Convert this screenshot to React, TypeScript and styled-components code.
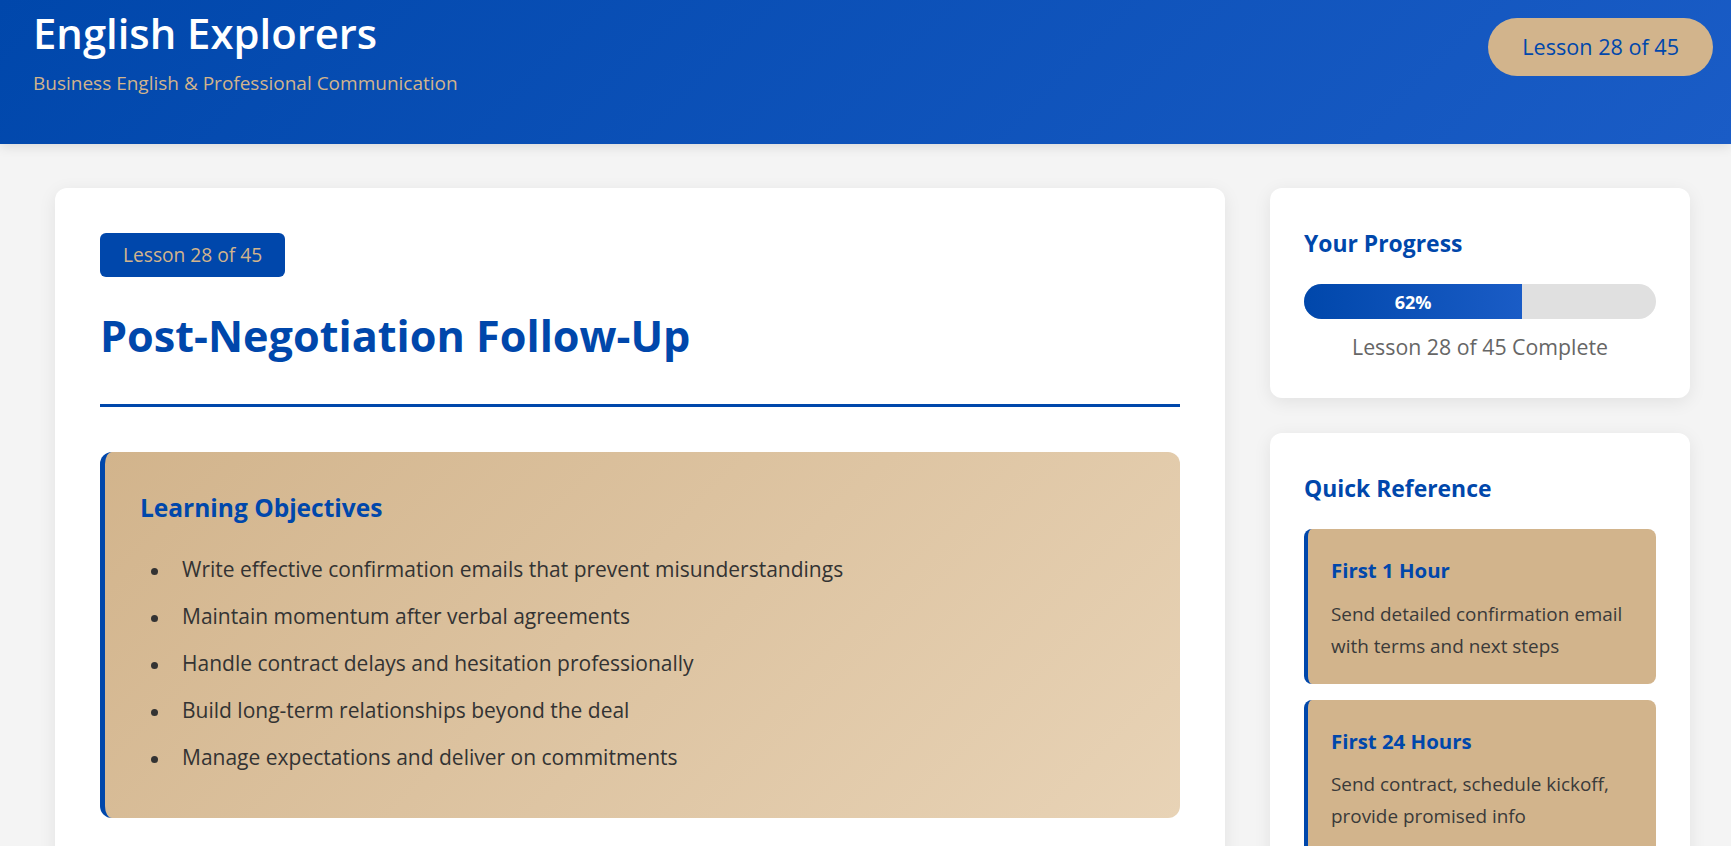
import styled, { createGlobalStyle } from 'styled-components'

const GlobalStyle = createGlobalStyle`
  body {
    margin: 0;
    background: #f4f4f4;
    font-family: 'Open Sans', 'Noto Sans', sans-serif;
    color: #333;
  }
`

const Header = styled.header`
  display: flex;
  justify-content: space-between;
  align-items: flex-start;
  height: 144px;
  box-sizing: border-box;
  padding: 7px 18px 0 33px;
  background: linear-gradient(135deg, #0047ab 0%, #1a5cc6 100%);
  box-shadow: 0 2px 12px rgba(0, 0, 0, 0.12);
`

const Brand = styled.div`
  display: flex;
  flex-direction: column;
`

const SiteTitle = styled.h1`
  margin: 0;
  font-size: 41.8px;
  line-height: 52px;
  font-weight: 600;
  color: #fff;
`

const Tagline = styled.p`
  margin: 10.5px 0 0;
  font-size: 19px;
  line-height: 26px;
  color: #d2b48c;
`

const LessonPill = styled.div`
  margin-top: 11px;
  padding: 15px 34px;
  border-radius: 40px;
  background: #d2b48c;
  color: #0047ab;
  font-size: 21.6px;
  line-height: 28px;
`

const Layout = styled.main`
  display: grid;
  grid-template-columns: 1fr 420px;
  gap: 45px;
  align-items: start;
  padding: 44px 41px 40px 55px;
`

const Card = styled.section`
  background: #fff;
  border-radius: 12px;
  box-shadow: 0 4px 18px rgba(0, 0, 0, 0.08);
`

const LessonCard = styled(Card)`
  padding: 45px;
`

const Badge = styled.span`
  display: inline-block;
  padding: 9px 23px;
  border-radius: 6px;
  background: #0047ab;
  color: #d2b48c;
  font-size: 19.2px;
  line-height: 26px;
`

const LessonTitle = styled.h2`
  margin: 32px 0 45px;
  padding-bottom: 41px;
  border-bottom: 3px solid #0047ab;
  font-size: 43.2px;
  line-height: 54px;
  font-weight: 700;
  color: #0047ab;
`

const Objectives = styled.div`
  padding: 35px 35px 37px;
  border-left: 5px solid #0047ab;
  border-radius: 12px;
  background: linear-gradient(135deg, #d2b48c 0%, #e8d3b6 100%);
`

const BoxHeading = styled.h3`
  margin: 0;
  font-size: 24.5px;
  line-height: 42px;
  font-weight: 700;
  color: #0047ab;
`

const ObjectiveList = styled.ul`
  margin: 17px 0 0;
  padding: 0;
  list-style: none;
`

const Objective = styled.li`
  display: flex;
  align-items: flex-start;
  padding: 8px 0;
  font-size: 21px;
  line-height: 31px;
  color: #333;

  &::before {
    content: '';
    flex: 0 0 7px;
    height: 7px;
    margin: 14px 24px 0 11px;
    border-radius: 50%;
    background: #333;
  }
`

const Sidebar = styled.aside`
  display: flex;
  flex-direction: column;
  gap: 35px;
`

const SideCard = styled(Card)`
  padding: 41px 34px 38px;
`

const SideHeading = styled.h3`
  margin: 0 0 25px;
  font-size: 22.9px;
  line-height: 30px;
  font-weight: 700;
  color: #0047ab;
`

const Track = styled.div`
  height: 35px;
  border-radius: 18px;
  background: #e0e0e0;
  overflow: hidden;
`

const Fill = styled.div`
  display: flex;
  align-items: center;
  justify-content: center;
  height: 100%;
  background: linear-gradient(90deg, #0047ab 0%, #1a5cc6 100%);
  color: #fff;
  font-size: 18px;
  font-weight: 700;
`

const ProgressNote = styled.p`
  margin: 14px 0 0;
  text-align: center;
  font-size: 21.3px;
  line-height: 27px;
  color: #666;
`

const RefItem = styled.div`
  margin-bottom: 16px;
  padding: 24px 22px 22px 23px;
  border-left: 4px solid #0047ab;
  border-radius: 8px;
  background: #d2b48c;
`

const RefTitle = styled.h4`
  margin: 0;
  font-size: 20.4px;
  line-height: 34px;
  font-weight: 700;
  color: #0047ab;
`

const RefText = styled.p`
  margin: 10.5px 0 0;
  font-size: 18.9px;
  line-height: 32px;
  color: #3a3a3a;
`

const objectives = [
  'Write effective confirmation emails that prevent misunderstandings',
  'Maintain momentum after verbal agreements',
  'Handle contract delays and hesitation professionally',
  'Build long-term relationships beyond the deal',
  'Manage expectations and deliver on commitments',
]

const references = [
  { title: 'First 1 Hour', text: 'Send detailed confirmation email with terms and next steps' },
  { title: 'First 24 Hours', text: 'Send contract, schedule kickoff, provide promised info' },
]

const progress = 62

const App = () => {
  return (
    <>
      <GlobalStyle />
      <Header>
        <Brand>
          <SiteTitle>English Explorers</SiteTitle>
          <Tagline>Business English &amp; Professional Communication</Tagline>
        </Brand>
        <LessonPill>Lesson 28 of 45</LessonPill>
      </Header>

      <Layout>
        <LessonCard>
          <Badge>Lesson 28 of 45</Badge>
          <LessonTitle>Post-Negotiation Follow-Up</LessonTitle>

          <Objectives>
            <BoxHeading>Learning Objectives</BoxHeading>
            <ObjectiveList>
              {objectives.map((item) => (
                <Objective key={item}>{item}</Objective>
              ))}
            </ObjectiveList>
          </Objectives>
        </LessonCard>

        <Sidebar>
          <SideCard>
            <SideHeading>Your Progress</SideHeading>
            <Track>
              <Fill style={{ width: `${progress}%` }}>{progress}%</Fill>
            </Track>
            <ProgressNote>Lesson 28 of 45 Complete</ProgressNote>
          </SideCard>

          <SideCard>
            <SideHeading>Quick Reference</SideHeading>
            {references.map((ref) => (
              <RefItem key={ref.title}>
                <RefTitle>{ref.title}</RefTitle>
                <RefText>{ref.text}</RefText>
              </RefItem>
            ))}
          </SideCard>
        </Sidebar>
      </Layout>
    </>
  )
}

export default App
